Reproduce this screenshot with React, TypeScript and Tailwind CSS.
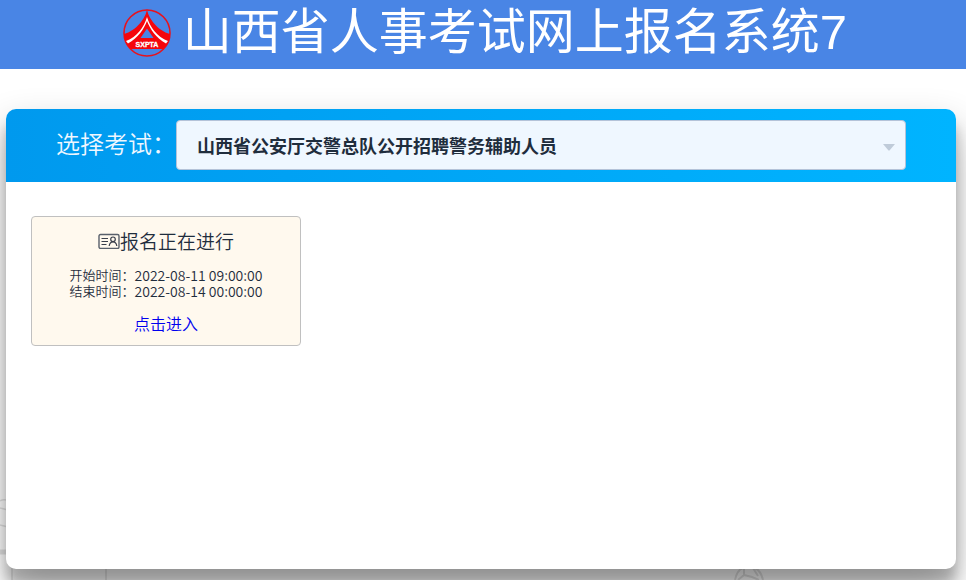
import { useState } from "react";

function Logo() {
  return (
    <svg viewBox="0 0 48 48" className="size-12 shrink-0" role="img" aria-label="SXPTA">
      <circle cx="24" cy="24" r="23" fill="none" stroke="#e8121c" strokeWidth="1.600" />
      <path d="M24 0C23 9 13 22 1 25C1 32 4 37 8 40H40C44 37 47 32 47 25C35 22 25 9 24 0Z" fill="#f5060c" />
      <path d="M24 8C21 18 14 28 3 32L5 34.500C15 29 21 20 24 12C27 20 33 29 43 34.500L45 32C34 28 27 18 24 8Z" fill="#fff" />
      <path d="M24 19.500L17.500 29H30.500Z" fill="#4985e5" />
      <text x="24" y="37.500" textAnchor="middle" fill="#fff" stroke="#fff" strokeWidth="0.300" fontFamily="Liberation Sans, sans-serif" fontSize="7" fontWeight="700">
        SXPTA
      </text>
    </svg>
  );
}

function IdCardIcon() {
  return (
    <svg viewBox="0 0 22 16" className="h-4 w-[22px]" fill="none" stroke="#3a3f4b" aria-hidden="true">
      <rect x="1" y="1.500" width="20" height="14" rx="1.500" stroke="#59606b" strokeWidth="1.400" />
      <path d="M3.500 5.500H10M3.500 8.500H10M3.500 11.500H8.500" />
      <circle cx="15" cy="6.300" r="2.300" strokeWidth="1.200" />
      <path d="M11.200 13C11.500 10.500 13 8.800 15 8.800S18.500 10.500 18.800 13" strokeWidth="1.200" />
    </svg>
  );
}

function Backdrop() {
  return (
    <div className="pointer-events-none absolute inset-x-0 bottom-0 h-24" aria-hidden="true">
      <svg viewBox="0 0 120 96" className="absolute bottom-0 left-0 h-24 w-[120px]" fill="none" stroke="#e2e2e2">
        <path d="M0 17Q3 15 6 16M0 24L8 26M0 41L8 43M12 70V96M106 84V96" strokeWidth="1.500" />
        <path d="M0 68H12" strokeWidth="5" />
      </svg>
      <svg viewBox="0 0 30 14" className="absolute bottom-0 left-[76%] h-3.5 w-[30px]" fill="none" stroke="#e2e2e2" strokeWidth="2">
        <path d="M1 14Q3 4 9 2M29 14Q27 5 21 2M10 2V9L4 14M10 9L18 11L25 14M19 2L24 10" />
      </svg>
    </div>
  );
}

const exams = ["山西省公安厅交警总队公开招聘警务辅助人员"];

export default function App() {
  const [exam, setExam] = useState(exams[0]);

  return (
    <div className="relative isolate flex min-h-screen flex-col overflow-hidden bg-white font-['Noto_Sans_CJK_SC',sans-serif] text-[#1f2d3d]">
      <header className="flex h-[69px] items-center justify-center gap-3 bg-[#4985e5] pb-1 pl-1">
        <Logo />
        <h1 className="font-['Liberation_Sans','KaiTi','STKaiti','Noto_Sans_CJK_SC',sans-serif] text-[49px] leading-none font-normal whitespace-nowrap text-white">
          山西省人事考试网上报名系统7
        </h1>
      </header>

      <div className="-z-10">
        <Backdrop />
      </div>

      <main className="flex grow flex-col pt-10 pr-2.5 pb-[11px] pl-1.5">
        <section className="grow rounded-[10px] bg-white shadow-[0_19px_38px_rgba(0,0,0,0.3),0_15px_12px_rgba(0,0,0,0.22)]">
          <div className="flex h-[73px] items-center rounded-t-[10px] bg-linear-to-r from-[#0099ee] to-[#00b4ff] px-[50px] pb-0.5">
            <label htmlFor="exam" className="w-[120px] shrink-0 pb-1 text-2xl font-[350] whitespace-nowrap text-[#eff7ff]">
              选择考试：
            </label>
            <div className="relative grow">
              <select
                id="exam"
                value={exam}
                onChange={(e) => setExam(e.target.value)}
                className="block h-[50px] w-full appearance-none rounded-sm border border-[#b4c3d9] bg-[#eff7ff] pr-10 pl-5 text-lg font-bold"
              >
                {exams.map((name) => (
                  <option key={name}>{name}</option>
                ))}
              </select>
              <svg viewBox="0 0 12 7" className="pointer-events-none absolute top-6 right-[11px] h-[7px] w-3" fill="#bfcbd9" aria-hidden="true">
                <path d="M0 0H12L6.500 6.500H5.500Z" />
              </svg>
            </div>
          </div>

          <div className="px-[25px] pt-[34px] pb-6">
            <article className="flex h-[130px] w-[270px] flex-col items-center rounded-sm border border-[#c0c0c0] bg-[#fff9ee] pt-2.5">
              <h2 className="flex items-center text-[19px] leading-7 font-[350]">
                <IdCardIcon />
                报名正在进行
              </h2>
              <dl className="mt-3 text-[13px] leading-4 font-[350]">
                <div className="flex">
                  <dt>开始时间：</dt>
                  <dd className="text-sm leading-4">2022-08-11 09:00:00</dd>
                </div>
                <div className="flex">
                  <dt>结束时间：</dt>
                  <dd className="text-sm leading-4">2022-08-14 00:00:00</dd>
                </div>
              </dl>
              <a href="#enter" className="mt-3 text-base font-[350] text-[#0000ee]">
                点击进入
              </a>
            </article>
          </div>
        </section>
      </main>
    </div>
  );
}
